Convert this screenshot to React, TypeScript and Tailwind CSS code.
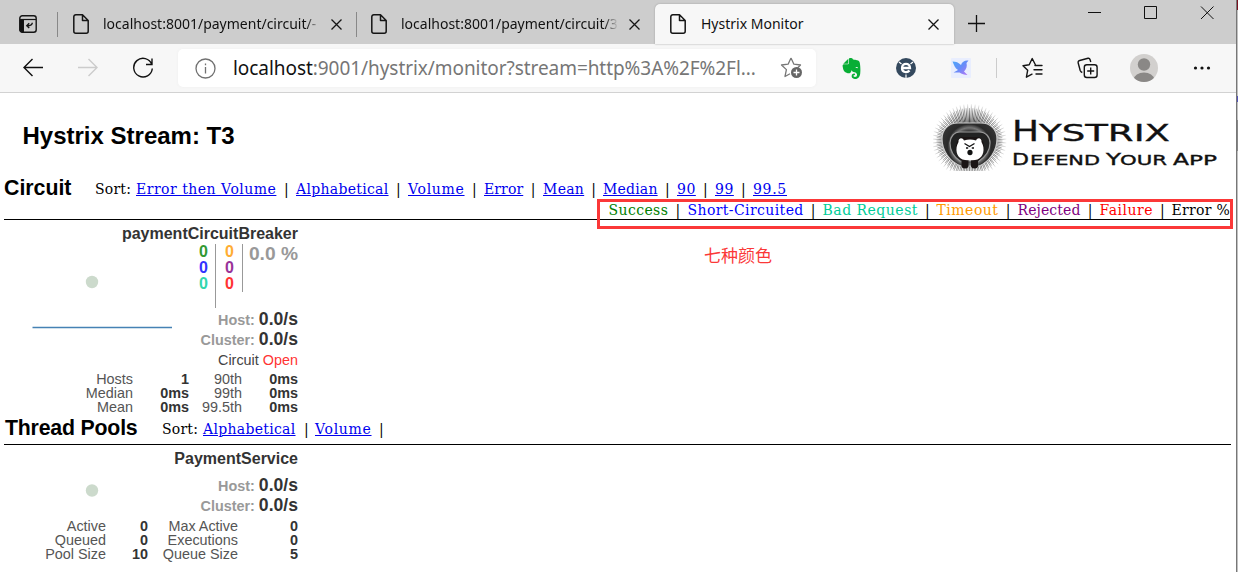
import React from "react";
import { SiEvernote } from "react-icons/si";

const sorts: [string, string, string][] = [
  ["Error then Volume", "w-[160px]", "tracking-[0.5px]"],
  ["Alphabetical", "w-[112px]", "tracking-[0.3px]"],
  ["Volume", "w-[76px]", "tracking-[0.7px]"],
  ["Error", "w-[59px]", "tracking-[0.1px]"],
  ["Mean", "w-[60px]", "tracking-[0.3px]"],
  ["Median", "w-[74px]", "tracking-[0.2px]"],
  ["90", "w-[38px]", "tracking-[0.5px]"],
  ["99", "w-[38px]", "tracking-[0.5px]"],
  ["99.5", "w-[40px]", "tracking-[0.7px]"],
];

const legend: [string, string, string][] = [
  ["Success", "w-[79px]", "text-[#008000] tracking-[0.4px]"],
  ["Short-Circuited", "w-[135px]", "text-[#0000ff] tracking-[0.4px]"],
  ["Bad Request", "w-[114px]", "text-[#00cc99] tracking-[0.5px]"],
  ["Timeout", "w-[81px]", "text-[#ff9900] tracking-[0.5px]"],
  ["Rejected", "w-[82px]", "text-[#800080] tracking-[0.1px]"],
  ["Failure", "w-[72px]", "text-[#ff0000] tracking-[0.5px]"],
  ["Error %", "w-[64px]", "text-black tracking-[0.3px]"],
];

const serif = "font-['DejaVu_Serif',serif] text-[14px] tracking-[-0.1px]";

function PageIcon() {
  return (
    <svg className="h-5 w-4 shrink-0" viewBox="0 0 16 20" fill="none" stroke="#151515" strokeWidth="1.5" strokeLinejoin="round">
      <path d="M2.8.8h6.7L15.2 6.5v10.7a2 2 0 0 1-2 2H2.8a2 2 0 0 1-2-2V2.8a2 2 0 0 1 2-2zM9.5.8v5.7h5.7" />
    </svg>
  );
}

function Cross() {
  return (
    <svg className="h-[11px] w-[11px] shrink-0" viewBox="0 0 11 11" stroke="#151515" strokeWidth="1.3">
      <path d="M.5.5l10 10M10.5.5l-10 10" />
    </svg>
  );
}

function TabBar() {
  return (
    <div className="flex h-[44px] bg-[#cdcdcd] font-['Noto_Sans',sans-serif] text-[14px] text-[#111]">
      <svg className="ml-[19px] mt-[15px] h-[18px] w-[18px]" viewBox="0 0 18 18" fill="none" stroke="#151515">
        <rect x=".8" y=".8" width="16.4" height="16.4" rx="2.5" strokeWidth="1.4" />
        <path d="M1 4.5h16" strokeWidth="1.2" />
        <path d="M1 5h3.500v12H3a2 2 0 0 1-2-2z" fill="#111" />
        <path d="M13.300 7.800c0 2.300-1.500 3-5.300 3M10.200 8.300L7.800 10.800l2.400 2.300" strokeWidth="1.400" />
      </svg>
      <div className="ml-[20px] mt-3 h-[25px] w-px bg-[#888]" />
      <div className="ml-[15px] flex h-[47px] w-[254px] items-center">
        <PageIcon />
        <span className="ml-[14px] w-[218px] overflow-hidden whitespace-nowrap bg-linear-to-r from-[#111] from-93% to-[#bbb] to-99% bg-clip-text text-transparent">localhost:8001/payment/circuit/-</span>
      </div>
      <div className="mt-[19px] ml-[4px]"><Cross /></div>
      <div className="ml-[14px] mt-3 h-[25px] w-px bg-[#888]" />
      <div className="ml-[14px] flex h-[47px] w-[254px] items-center">
        <PageIcon />
        <span className="ml-[14px] w-[218px] overflow-hidden whitespace-nowrap bg-linear-to-r from-[#111] from-93% to-[#bbb] to-99% bg-clip-text text-transparent">localhost:8001/payment/circuit/3</span>
      </div>
      <div className="mt-[19px] ml-[4px]"><Cross /></div>
      <div className="ml-[15px] mt-1 flex h-[40px] w-[299px] items-center rounded-t-[5px] bg-[#f7f7f7] pl-[15px] shadow-[0_0_2px_#999]">
        <PageIcon />
        <span className="ml-[15px] w-[227px] whitespace-nowrap pb-px">Hystrix Monitor</span>
        <Cross />
      </div>
      <svg className="ml-[14px] mt-[15px] h-[17px] w-[17px]" viewBox="0 0 17 17" stroke="#111" strokeWidth="1.3">
        <path d="M8.5 0v17M0 8.5h17" />
      </svg>
      <svg className="ml-[103px] mt-[6px] h-[14px] w-[128px]" viewBox="0 0 128 14" fill="none" stroke="#111">
        <path d="M0 6.5h13M56.5.5h12v12h-12zM113 .5l12.5 12.5M125.5.5L113 13" />
      </svg>
    </div>
  );
}

function Toolbar() {
  return (
    <div className="flex h-[49px] items-center border-b border-[#d2d2d2] bg-[#f7f7f7]">
      <svg className="ml-[22px] h-[22px] w-[132px] shrink-0" viewBox="0 0 132 22" fill="none" strokeWidth="1.4">
        <path d="M21 10.500H2M10.500 2L2 10.500l8.500 8.500" stroke="#111" />
        <path d="M56 10.500h19M66.500 2L75 10.500l-8.500 8.500" stroke="#ccc" />
        <path d="M129.800 7.500A9.300 9.300 0 1 0 130.300 11.500M130 1.500v6h-6" stroke="#111" />
      </svg>
      <div className="ml-[24px] flex h-[38px] w-[638px] shrink-0 items-center rounded-[5px] bg-white shadow-[0_0_3px_#eee]">
        <svg className="ml-[17px] h-[21px] w-[21px]" viewBox="0 0 21 21" fill="none" stroke="#717171" strokeWidth="1.300">
          <circle cx="10.500" cy="10.500" r="9.500" />
          <path d="M10.500 9v6.500M10.500 5.500v1.800" />
        </svg>
        <span className="ml-[17px] w-[547px] whitespace-nowrap font-['Noto_Sans',sans-serif] text-[19px] leading-[36px] tracking-[-0.06px] text-[#767676]">
          <span className="text-[#111]">localhost</span>:9001/hystrix/monitor?stream=http%3A%2F%2Fl...
        </span>
        <svg className="h-[22px] w-[23px]" viewBox="0 0 23 22" fill="none" stroke="#777" strokeWidth="1.300" strokeLinejoin="round">
          <path d="M11 1l2.900 6.200 6.600.8-3 3M11 1L8.100 7.200 1.500 8l4.900 4.600L5 19.500l5-2.800" />
          <circle cx="16.500" cy="15.500" r="5.500" fill="#666" stroke="none" />
          <path d="M16.500 12.500v6M13.500 15.500h6" stroke="#fff" />
        </svg>
      </div>
      <SiEvernote className="ml-[25px] h-[21px] w-[21px] shrink-0 text-[#08ae35]" />
      <svg className="ml-[34px] h-[20px] w-[20px] shrink-0" viewBox="0 0 20 20">
        <circle cx="10" cy="10" r="10" fill="#34495e" />
        <path d="M6 10h8c0-5.500-8-5.500-8 0 0 4.800 5.500 5 7.500 2.600" fill="none" stroke="#fff" strokeWidth="2.300" />
        <path d="M3 4l2.500 2M17 4l-2.500 2M10 16.500V20" stroke="#fff" strokeWidth="1.200" />
      </svg>
      <svg className="ml-[35px] h-[20px] w-[20px] shrink-0" viewBox="0 0 20 20">
        <defs>
          <linearGradient id="wing" x1="0" y1="0" x2="1" y2="1">
            <stop stopColor="#4ba8fa" /><stop offset=".5" stopColor="#668cf8" /><stop offset="1" stopColor="#bb75f5" />
          </linearGradient>
        </defs>
        <rect width="20" height="20" rx="1" fill="#e9eefe" />
        <path d="M1.500 3.500c3.500 0 6 1 8.500 3.500C11 3.500 14 2 17.500 2.500L15.500 5c.8 3 0 6-2.500 8.500l3.500 3.500c-3-.2-6-.8-8-2.500L2.500 14.500l4.500-2.500C4 10.500 3 7 1.500 3.500z" fill="url(#wing)" />
      </svg>
      <div className="ml-[25px] h-5 w-px bg-[#ccc]" />
      <svg className="ml-[25px] h-[22px] w-[21px] shrink-0" viewBox="0 0 21 22" fill="none" stroke="#151515" strokeWidth="1.400" strokeLinejoin="round" strokeLinecap="round">
        <path d="M13.500 8L10.200 1.500 7.200 7.800l-6.200.9 4.700 4.500-1.300 7 5.600-3M13 8.500h7M12 12.800h8M14 17h6" />
      </svg>
      <svg className="ml-[34px] h-[22px] w-[21px] shrink-0" viewBox="0 0 21 22" fill="none" stroke="#151515" strokeWidth="1.400">
        <rect x="7.300" y="7.700" width="12.800" height="12.800" rx="2.500" />
        <path d="M13.700 10.500v7M10.200 14h7M13.800 5l-.8-2.500Q12.500.9 11 1.300L2.700 3.500Q.7 4 1.200 6l2 7.500Q3.700 15 5.300 15.500" />
      </svg>
      <svg className="ml-[32px] h-7 w-7 shrink-0" viewBox="0 0 28 28">
        <clipPath id="face"><circle cx="14" cy="14" r="14" /></clipPath>
        <circle cx="14" cy="14" r="14" fill="#d2d0ce" />
        <circle cx="14" cy="10.500" r="6.200" fill="#8a8886" />
        <ellipse cx="14" cy="25" rx="10" ry="6.500" fill="#8a8886" clipPath="url(#face)" />
      </svg>
      <svg className="ml-[35px] h-1 w-[18px] shrink-0" viewBox="0 0 18 4" fill="#111">
        <circle cx="2.500" cy="2" r="1.600" /><circle cx="9" cy="2" r="1.600" /><circle cx="15.500" cy="2" r="1.600" />
      </svg>
    </div>
  );
}

const spikes = Array.from({ length: 120 }, (_, i) => (i * Math.PI * 2) / 120);

function Logo() {
  return (
    <svg className="h-[72px] w-[290px]" viewBox="0 0 290 72" fill="#111">
      <defs>
        <radialGradient id="quills" gradientUnits="userSpaceOnUse" cx="36.5" cy="38" r="37">
          <stop offset=".55" stopColor="#222" /><stop offset=".8" stopColor="#777" /><stop offset="1" stopColor="#eee" />
        </radialGradient>
        <radialGradient id="shell" gradientUnits="userSpaceOnUse" cx="36.5" cy="43" r="28">
          <stop offset=".5" stopColor="#222" /><stop offset=".65" stopColor="#777" /><stop offset=".78" stopColor="#2a2a2a" /><stop offset="1" stopColor="#333" />
        </radialGradient>
        <clipPath id="base"><rect width="80" height="68" /></clipPath>
      </defs>
      <g clipPath="url(#base)">
        {spikes.map((a, i) => (
          <line key={i} x1={36.5 + 22 * Math.cos(a)} y1={38 + 18 * Math.sin(a)} x2={36.5 + (i % 2 ? 37 : 33) * Math.cos(a)} y2={38 + (i % 2 ? 37 : 33) * Math.sin(a)} stroke="url(#quills)" strokeWidth=".8" />
        ))}
        <path d="M25 20h23c10 0 16 7 16 16 0 12-8 23-18 27H28C17 59 9 48 9 36c0-9 6-16 16-16z" fill="url(#shell)" stroke="#ccc" strokeWidth="1.200" />
        <path d="M27 29h19c7 0 11 5 11 11 0 8-5 14-11 18H27c-6-4-10-10-10-18 0-6 4-11 10-11z" fill="#222" stroke="#999" strokeWidth="1.200" />
        <path d="M28 34h18c7 4 7 18-1 24H29c-8-6-8-20-1-24z" fill="#1a1414" />
        <path d="M25.500 39c-.5-4 4-5 5.500-1.500 4-1.500 8-1.500 12 0 1.500-3.500 6-2.500 5.500 1.500 4 7 2 15-4 17.500-5 1.500-10 1.500-15 0-6-2.500-8-10.500-4-17.500z" fill="#fff" />
        <path d="M31.500 40.500l5 3 5-3M33 45h2.200M38.800 45h2.200" fill="none" stroke="#111" strokeWidth="1.300" />
        <ellipse cx="37" cy="49.500" rx="2.600" ry="2.800" />
        <path d="M28.500 57.500h7v6q-.5 2-3.500 2t-3.500-2zM38 57.500h7v6q-.5 2-3.500 2t-3.500-2z" fill="#1a1414" />
      </g>
      <g className="font-['DejaVu_Sans',sans-serif]" stroke="#111" strokeWidth=".35">
        <text x="79" y="38" fontSize="28" textLength="27" lengthAdjust="spacingAndGlyphs">H</text>
        <text x="106" y="38" fontSize="23.500" textLength="131" lengthAdjust="spacingAndGlyphs">YSTRIX</text>
        <text x="79" y="62" fontSize="16" textLength="17" lengthAdjust="spacingAndGlyphs">D</text>
        <text x="97" y="62" fontSize="13.500" textLength="70" lengthAdjust="spacingAndGlyphs">EFEND</text>
        <text x="173" y="62" fontSize="16" textLength="15" lengthAdjust="spacingAndGlyphs">Y</text>
        <text x="187" y="62" fontSize="13.500" textLength="47" lengthAdjust="spacingAndGlyphs">OUR</text>
        <text x="240" y="62" fontSize="16" textLength="16" lengthAdjust="spacingAndGlyphs">A</text>
        <text x="256" y="62" fontSize="13.500" textLength="28" lengthAdjust="spacingAndGlyphs">PP</text>
      </g>
    </svg>
  );
}

function Rates() {
  return (
    <div className="text-right text-[14.4px] font-bold leading-5 text-[#999]">
      <p className="h-5">Host: <span className="text-[17.6px] text-[#333]">0.0/s</span></p>
      <p className="h-5">Cluster: <span className="text-[17.6px] text-[#333]">0.0/s</span></p>
    </div>
  );
}

function Stats({ rows, cols }: { rows: string[][]; cols: string }) {
  return (
    <div className={`grid ${cols} text-right text-[14.4px] leading-[14px] text-[#555]`}>
      {rows.flat().map((v, i) => (
        <span key={i} className={i % 2 ? "font-bold text-[#333]" : ""}>{v}</span>
      ))}
    </div>
  );
}

export default function App() {
  return (
    <div className="flex h-[572px] w-[1238px] overflow-hidden bg-white font-['Liberation_Sans',sans-serif] text-black">
      <div className="w-[1236px] shrink-0">
        <TabBar />
        <Toolbar />
        <header className="flex h-[83px] justify-between">
          <h1 className="ml-[22.5px] mt-[29px] whitespace-nowrap text-[24px] font-bold leading-7">Hystrix Stream: T3</h1>
          <div className="mr-[13px] mt-[10px]"><Logo /></div>
        </header>

        <div className="relative ml-1 mr-[5px] h-[44px] border-b border-black">
          <div className="flex h-6 items-center">
            <h2 className="w-[91px] text-[21.3px] font-bold leading-6">Circuit</h2>
            <div className={`flex pt-[3px] ${serif}`}>
              <span className="w-[41px] tracking-[0.2px]">Sort:</span>
              {sorts.map(([label, w, tracking], i) => (
                <div key={label} className={`flex whitespace-nowrap ${w}`}>
                  <a className={`text-[#0000ee] underline ${tracking}`}>{label}</a>
                  {i < sorts.length - 1 && <span className="flex-1 text-center">|</span>}
                </div>
              ))}
            </div>
          </div>
          <div className={`ml-[604.5px] flex h-5 items-center ${serif}`}>
            {legend.map(([label, w, color], i) => (
              <div key={label} className={`flex shrink-0 whitespace-nowrap ${w}`}>
                <span className={color}>{label}</span>
                {i < legend.length - 1 && <span className="flex-1 text-center">|</span>}
              </div>
            ))}
          </div>
          <div className="absolute left-[593px] top-[23px] h-[30px] w-[636px] border-[3px] border-[#fb3838]" />
          <p className="absolute left-[700px] top-[68px] whitespace-nowrap font-['Noto_Sans_CJK_SC',sans-serif] text-[17px] leading-[22px] text-[#fb3838]">七种颜色</p>
        </div>

        <section className="h-[195px] w-[298px] pt-[4px]">
          <h3 className="h-[20px] text-right text-[16px] font-bold leading-[20px] text-[#333]">paymentCircuitBreaker</h3>
          <div className="flex h-[128px]">
            <svg className="h-[100px] w-[180px] shrink-0" viewBox="0 0 180 100">
              <circle cx="92" cy="38" r="6.200" fill="#ccdacc" />
              <path d="M32.500 83.500h139.500" stroke="#4682b4" strokeWidth="1.300" />
            </svg>
            <div className="w-[118px]">
              <div className="flex h-[65px] text-right text-[16px] font-bold leading-4">
                <div className="h-[64px] w-[36px] border-r border-[#999] pr-[7px]">
                  <p className="text-[#339933]">0</p><p className="text-[#3333ff]">0</p><p className="text-[#33d6ad]">0</p>
                </div>
                <div className="h-[48px] w-[27px] border-r border-[#999] pr-[8px]">
                  <p className="text-[#ffad33]">0</p><p className="text-[#993399]">0</p><p className="text-[#ff3333]">0</p>
                </div>
                <span className="flex-1 whitespace-nowrap text-[19.2px] leading-5 text-[#999]">0.0 %</span>
              </div>
              <Rates />
              <p className="mt-px h-5 text-right text-[14.4px] leading-5 text-[#444]">Circuit <span className="text-[#ff3333]">Open</span></p>
            </div>
          </div>
          <Stats cols="grid-cols-[133px_56px_53px_56px]" rows={[["Hosts", "1", "90th", "0ms"], ["Median", "0ms", "99th", "0ms"], ["Mean", "0ms", "99.5th", "0ms"]]} />
        </section>

        <div className="ml-1 mr-[5px] flex h-[30px] border-b border-black">
          <h2 className="w-[158px] pl-px pt-px text-[21.3px] font-bold leading-6 tracking-[-0.2px]">Thread Pools</h2>
          <div className={`flex pt-[4px] ${serif}`}>
            <span className="w-[41px] tracking-[0.2px]">Sort:</span>
            <a className="w-[101px] tracking-[0.3px] text-[#0000ee]"><u>Alphabetical</u></a>
            <span className="w-[11px]">|</span>
            <a className="w-[64px] tracking-[0.7px] text-[#0000ee]"><u>Volume</u></a>
            <span>|</span>
          </div>
        </div>

        <section className="w-[298px] pt-[4px]">
          <h3 className="h-[26px] text-right text-[16px] font-bold leading-[20px] text-[#333]">PaymentService</h3>
          <div className="flex h-[44px] justify-between">
            <svg className="h-[40px] w-[180px]" viewBox="0 0 180 40">
              <circle cx="92" cy="15.500" r="6.200" fill="#ccdacc" />
            </svg>
            <Rates />
          </div>
          <Stats cols="grid-cols-[106px_42px_90px_60px]" rows={[["Active", "0", "Max Active", "0"], ["Queued", "0", "Executions", "0"], ["Pool Size", "10", "Queue Size", "5"]]} />
        </section>
      </div>
      <div className="w-[2px] border-l border-[#777] bg-[#c0c0c0]">
        <div className="h-[10px] w-px bg-[#7a1020]" />
        <div className="mt-[86px] h-[6px] w-px bg-[#5555bb]" />
        <div className="mt-[18px] h-[31px] w-px bg-[#888]" />
      </div>
    </div>
  );
}
